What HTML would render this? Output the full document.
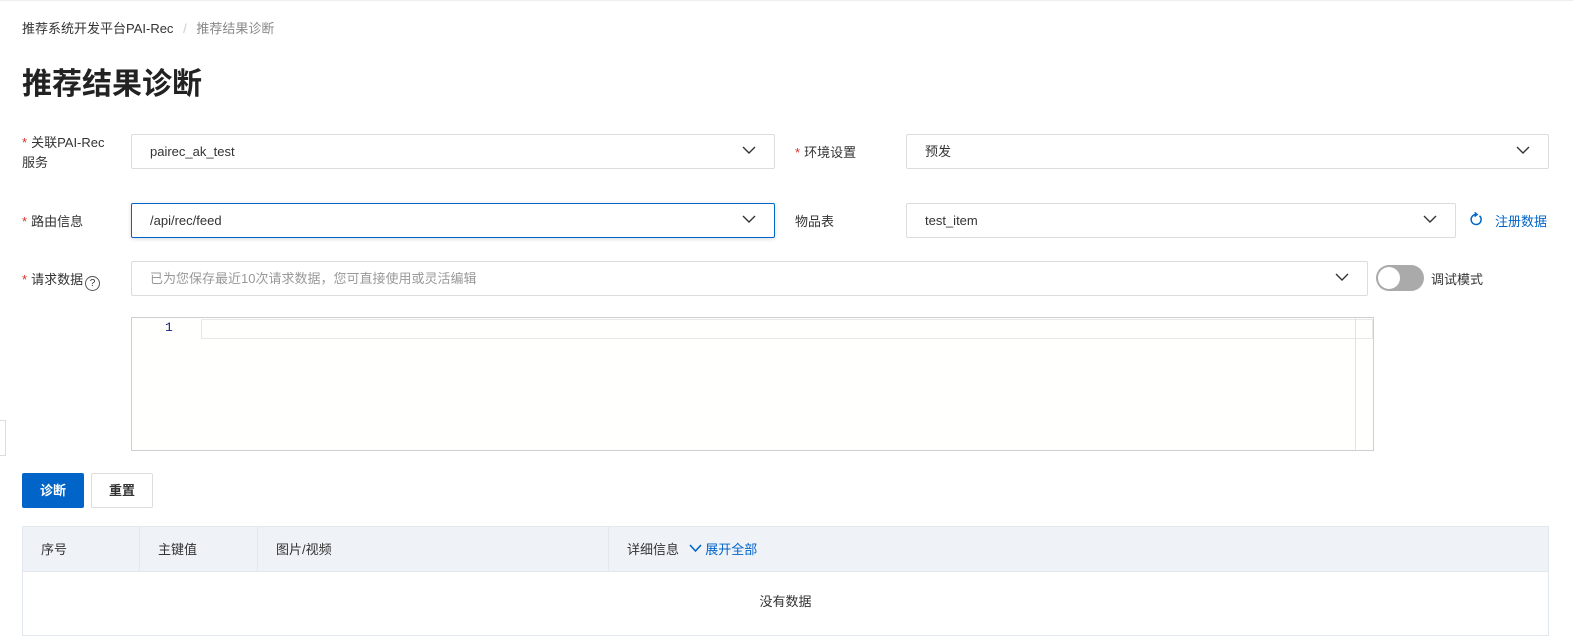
<!DOCTYPE html>
<html><head><meta charset="utf-8"><style>
*{box-sizing:border-box;margin:0;padding:0}
body{width:1573px;height:630px;overflow:hidden;background:#fff;font-family:"Liberation Sans","Noto Sans CJK SC",sans-serif;color:#333;font-size:13px;position:relative}
.a{position:absolute}
.lbl{font-size:13px;color:#333}
.req{color:#d93026;margin-right:4px}
.sel{position:absolute;border:1px solid #dcdcdc;border-radius:2px;background:#fff;height:35px;padding-left:18px;line-height:33px;font-size:13px;color:#333}
.sel svg{position:absolute;right:18px;top:11px}
.focus{border-color:#0064c8;box-shadow:0 1px 4px rgba(0,0,0,.15)}
.th{position:absolute;top:0;height:45px;line-height:45px;font-size:13px;color:#333;border-right:1px solid #e3e7ee;padding-left:18px}
</style></head><body>
<div class="a" style="left:0;top:0;width:1573px;height:1px;background:#eee"></div>
<div class="a" style="left:22px;top:18px;font-size:13px;color:#333">推荐系统开发平台PAI-Rec <span style="color:#ccc;margin:0 6px">/</span> <span style="color:#888">推荐结果诊断</span></div>
<div class="a" style="left:22px;top:59px;font-size:30px;font-weight:bold;color:#222">推荐结果诊断</div>

<div class="a lbl" style="left:22px;top:133px;line-height:20px"><span class="req">*</span>关联PAI-Rec<br>服务</div>
<div class="sel" style="left:131px;top:134px;width:644px">pairec_ak_test<svg width="14" height="9" viewBox="0 0 14 9"><path d="M1 1l6 6 6-6" stroke="#333" stroke-width="1.4" fill="none"/></svg></div>
<div class="a lbl" style="left:795px;top:142px"><span class="req">*</span>环境设置</div>
<div class="sel" style="left:906px;top:134px;width:643px">预发<svg width="14" height="9" viewBox="0 0 14 9"><path d="M1 1l6 6 6-6" stroke="#333" stroke-width="1.4" fill="none"/></svg></div>

<div class="a lbl" style="left:22px;top:211px"><span class="req">*</span>路由信息</div>
<div class="sel focus" style="left:131px;top:203px;width:644px">/api/rec/feed<svg width="14" height="9" viewBox="0 0 14 9"><path d="M1 1l6 6 6-6" stroke="#333" stroke-width="1.4" fill="none"/></svg></div>
<div class="a lbl" style="left:795px;top:211px">物品表</div>
<div class="sel" style="left:906px;top:203px;width:550px">test_item<svg width="14" height="9" viewBox="0 0 14 9"><path d="M1 1l6 6 6-6" stroke="#333" stroke-width="1.4" fill="none"/></svg></div>
<svg class="a" style="left:1469px;top:211px" width="14" height="16" viewBox="0 0 14 16"><path d="M7 3.5A5 5 0 1 0 10.5 4.8" stroke="#0064c8" stroke-width="1.5" fill="none"/><path d="M5.6 1.4L8.2 3.5 5.6 5.6" stroke="#0064c8" stroke-width="1.4" fill="none"/></svg>
<div class="a" style="left:1495px;top:211px;color:#0064c8;font-size:13px">注册数据</div>

<div class="a lbl" style="left:22px;top:269px"><span class="req">*</span>请求数据<span style="display:inline-block;width:15px;height:15px;border:1px solid #555;border-radius:50%;font-size:10px;line-height:13px;text-align:center;margin-left:2px;vertical-align:-2px">?</span></div>
<div class="sel" style="left:131px;top:261px;width:1237px;color:#999">已为您保存最近10次请求数据，您可直接使用或灵活编辑<svg width="14" height="9" viewBox="0 0 14 9"><path d="M1 1l6 6 6-6" stroke="#333" stroke-width="1.4" fill="none"/></svg></div>
<div class="a" style="left:1376px;top:265px;width:48px;height:26px;border-radius:13px;background:#aaa"><div style="position:absolute;left:2px;top:2px;width:22px;height:22px;border-radius:50%;background:#fff"></div></div>
<div class="a lbl" style="left:1431px;top:269px">调试模式</div>

<div class="a" style="left:131px;top:317px;width:1243px;height:134px;border:1px solid #cfcfcf;background:#fffffd">
 <div class="a" style="left:33px;top:2px;font-family:'Liberation Mono',monospace;font-size:13px;color:#1a237e">1</div>
 <div class="a" style="left:69px;top:1px;width:1172px;height:20px;border:1px solid #e8e8e8;background:#fffffd"></div>
 <div class="a" style="left:1223px;top:0;width:1px;height:132px;background:#e2e2e2"></div>
</div>
<div class="a" style="left:0;top:420px;width:6px;height:36px;border:1px solid #ddd;border-left:none;background:#fff"></div>

<div class="a" style="left:22px;top:473px;width:62px;height:35px;background:#0064c8;border-radius:2px;color:#fff;font-weight:bold;text-align:center;line-height:35px">诊断</div>
<div class="a" style="left:91px;top:473px;width:62px;height:35px;border:1px solid #ddd;border-radius:2px;color:#333;font-weight:bold;text-align:center;line-height:33px">重置</div>

<div class="a" style="left:22px;top:526px;width:1527px;height:110px;border:1px solid #e3e7ee">
 <div class="a" style="left:0;top:0;width:1525px;height:45px;background:#eff3f8;border-bottom:1px solid #e3e7ee">
  <div class="th" style="left:0;width:117px">序号</div>
  <div class="th" style="left:117px;width:118px">主键值</div>
  <div class="th" style="left:235px;width:351px">图片/视频</div>
  <div class="th" style="left:586px;width:939px;border-right:none">详细信息 <span style="color:#0064c8;margin-left:6px"><svg width="13" height="9" viewBox="0 0 13 9" style="vertical-align:1px"><path d="M1 1l5.5 6 5.5-6" stroke="#0064c8" stroke-width="1.6" fill="none"/></svg> 展开全部</span></div>
 </div>
 <div class="a" style="left:0;top:64px;width:1525px;text-align:center;font-size:13px;color:#333">没有数据</div>
</div>
</body></html>
